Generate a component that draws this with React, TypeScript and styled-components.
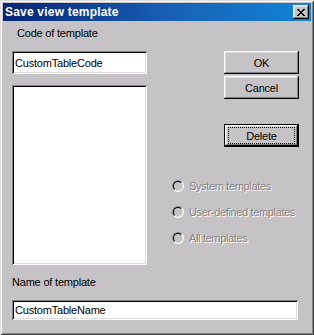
import styled, { createGlobalStyle } from "styled-components";

const GlobalStyle = createGlobalStyle`
  html, body {
    margin: 0;
    padding: 0;
    background: #c6c3c6;
  }
  * {
    box-sizing: border-box;
  }
`;

const face = "#c6c3c6";

const Window = styled.div`
  width: 314px;
  height: 335px;
  background: ${face};
  display: flex;
  flex-direction: column;
  padding: 3px;
  font-family: "Liberation Sans", Arial, sans-serif;
  font-size: 11px;
  letter-spacing: -0.2px;
  color: #000;
  box-shadow: inset 1px 1px #dedbde, inset -1px -1px #424142,
    inset 2px 2px #ffffff, inset -2px -2px #848284;
`;

const TitleBar = styled.div`
  height: 18px;
  display: flex;
  align-items: center;
  justify-content: space-between;
  padding: 0 2px 0 2px;
  background: linear-gradient(to right, #082473 0%, #1861b5 55%, #1084d6 100%);
`;

const Title = styled.span`
  color: #fff;
  font-weight: bold;
  font-size: 12px;
  letter-spacing: 0.2px;
`;

const CloseButton = styled.div`
  width: 16px;
  height: 14px;
  background: ${face};
  display: flex;
  align-items: center;
  justify-content: center;
  box-shadow: inset -1px -1px #000, inset 1px 1px #fff,
    inset -2px -2px #848284, inset 2px 2px #dedbde;
`;

const Body = styled.div`
  flex: 1;
  display: flex;
  flex-direction: column;
  padding: 6px 13px 0 9px;
`;

const TopRow = styled.div`
  display: flex;
`;

const LeftCol = styled.div`
  width: 135px;
  flex-shrink: 0;
  display: flex;
  flex-direction: column;
`;

const Label = styled.div<{ $indent?: number }>`
  height: 13px;
  line-height: 13px;
  padding-left: ${(p) => p.$indent ?? 0}px;
  white-space: nowrap;
`;

const Field = styled.div<{ $height: number }>`
  height: ${(p) => p.$height}px;
  margin-top: 11px;
  background: #fff;
  display: flex;
  align-items: center;
  padding: 0 3px;
  white-space: nowrap;
  box-shadow: inset 1px 1px #848284, inset -1px -1px #fff,
    inset 2px 2px #000, inset -2px -2px #dedbde;
`;

const ListBox = styled.div`
  height: 180px;
  margin-top: 11px;
  background: #fff;
  box-shadow: inset 1px 1px #848284, inset -1px -1px #fff,
    inset 2px 2px #000, inset -2px -2px #dedbde;
`;

const RightCol = styled.div`
  flex: 1;
  display: flex;
  flex-direction: column;
  align-items: flex-start;
  padding-top: 24px;
`;

const ButtonStack = styled.div`
  margin-left: 77px;
  display: flex;
  flex-direction: column;
`;

const Button = styled.div<{ $default?: boolean; $gap?: number }>`
  width: 75px;
  height: 23px;
  margin-top: ${(p) => p.$gap ?? 0}px;
  background: ${face};
  display: flex;
  align-items: center;
  justify-content: center;
  position: relative;
  box-shadow: ${(p) =>
    p.$default
      ? "inset 0 0 0 1px #000, inset -2px -2px #000, inset 2px 2px #fff, inset -3px -3px #848284, inset 3px 3px #dedbde"
      : "inset -1px -1px #000, inset 1px 1px #fff, inset -2px -2px #848284, inset 2px 2px #dedbde"};
`;

const FocusRing = styled.span`
  position: absolute;
  left: 4px;
  top: 3px;
  right: 4px;
  bottom: 3px;
  border: 1px dotted #000;
`;

const RadioGroup = styled.div`
  margin-left: 25px;
  margin-top: 32px;
  display: flex;
  flex-direction: column;
  gap: 13px;
`;

const RadioRow = styled.div`
  height: 13px;
  display: flex;
  align-items: center;
  gap: 5px;
  color: #848284;
  letter-spacing: -0.35px;
  text-shadow: 1px 1px 0 #fff;
  white-space: nowrap;
`;

const RadioOuter = styled.span`
  width: 12px;
  height: 12px;
  flex-shrink: 0;
  border-radius: 50%;
  border: 1px solid;
  border-color: #848284 #fff #fff #848284;
  display: flex;
`;

const RadioInner = styled.span`
  flex: 1;
  border-radius: 50%;
  border: 1px solid;
  border-color: #000 #dedbde #dedbde #000;
  background: ${face};
`;

const BottomLabel = styled(Label)`
  margin-top: 11px;
`;

function CloseIcon() {
  return (
    <svg width="8" height="7" viewBox="0 0 8 7" shapeRendering="crispEdges">
      <path
        d="M0 0h2v1h-2zM6 0h2v1h-2zM1 1h2v1h-2zM5 1h2v1h-2zM2 2h4v1h-4zM3 3h2v1h-2zM2 4h4v1h-4zM1 5h2v1h-2zM5 5h2v1h-2zM0 6h2v1h-2zM6 6h2v1h-2z"
        fill="#000"
      />
    </svg>
  );
}

function Radio({ label }: { label: string }) {
  return (
    <RadioRow>
      <RadioOuter>
        <RadioInner />
      </RadioOuter>
      {label}
    </RadioRow>
  );
}

export default function App() {
  return (
    <>
      <GlobalStyle />
      <Window>
        <TitleBar>
          <Title>Save view template</Title>
          <CloseButton>
            <CloseIcon />
          </CloseButton>
        </TitleBar>
        <Body>
          <TopRow>
            <LeftCol>
              <Label $indent={5}>Code of template</Label>
              <Field $height={23}>CustomTableCode</Field>
              <ListBox />
            </LeftCol>
            <RightCol>
              <ButtonStack>
                <Button>OK</Button>
                <Button $gap={2}>Cancel</Button>
                <Button $default $gap={25}>
                  <FocusRing />
                  Delete
                </Button>
              </ButtonStack>
              <RadioGroup>
                <Radio label="System templates" />
                <Radio label="User-defined templates" />
                <Radio label="All templates" />
              </RadioGroup>
            </RightCol>
          </TopRow>
          <BottomLabel>Name of template</BottomLabel>
          <Field $height={20}>CustomTableName</Field>
        </Body>
      </Window>
    </>
  );
}
